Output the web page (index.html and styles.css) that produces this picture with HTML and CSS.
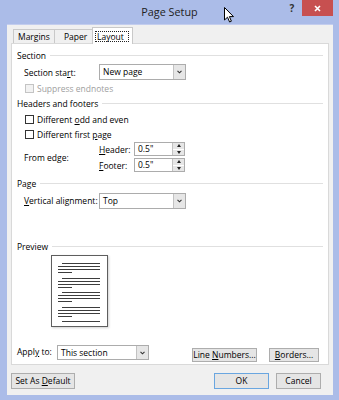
FILE: index.html
```html
<!DOCTYPE html>
<html lang="en">
<head>
    <meta charset="UTF-8">
    <title>Page Setup</title>
    <link rel="stylesheet" href="styles.css">
</head>
<body>
    <div class="window">
        <div class="titlebar">
            <span></span>
            <div class="title">Page Setup</div>
            <div class="caption-btns">
                <span class="help">?</span>
                <span class="close">
                    <svg width="7" height="7" viewBox="0 0 7 7"><path d="M1 1L6 6M6 1L1 6" stroke="#fff" stroke-width="1.6"/></svg>
                </span>
            </div>
        </div>

        <div class="client">
            <div class="tabs">
                <div class="tab">Margins</div>
                <div class="tab">Paper</div>
                <div class="tab active"><span class="focus">Layout</span></div>
            </div>

            <div class="panel">
                <div class="group-head"><span>Section</span></div>
                <div class="row form-row indent">
                    <span>Section sta<u>r</u>t:</span>
                    <div class="combo"><span>New page</span><i class="arrow"><svg width="5" height="4" viewBox="0 0 5 4"><path d="M0.5 0.8L2.5 2.8L4.5 0.8" fill="none" stroke="#333" stroke-width="1.1"/></svg></i></div>
                </div>
                <div class="row check-row indent disabled">
                    <i class="check"></i><span>Suppress endnotes</span>
                </div>

                <div class="group-head hf"><span>Headers and footers</span></div>
                <div class="row check-row indent odd">
                    <i class="check"></i><span>Different <u>o</u>dd and even</span>
                </div>
                <div class="row check-row indent">
                    <i class="check"></i><span>Different first <u>p</u>age</span>
                </div>
                <div class="edge indent">
                    <span class="edge-label">From edge:</span>
                    <span><u>H</u>eader:</span>
                    <div class="spin"><span>0.5"</span><i class="spin-btns"><b class="up"></b><b class="down"></b></i></div>
                    <span><u>F</u>ooter:</span>
                    <div class="spin"><span>0.5"</span><i class="spin-btns"><b class="up"></b><b class="down"></b></i></div>
                </div>

                <div class="group-head page-head"><span>Page</span></div>
                <div class="row form-row indent valign">
                    <span><u>V</u>ertical alignment:</span>
                    <div class="combo"><span>Top</span><i class="arrow"><svg width="5" height="4" viewBox="0 0 5 4"><path d="M0.5 0.8L2.5 2.8L4.5 0.8" fill="none" stroke="#333" stroke-width="1.1"/></svg></i></div>
                </div>

                <div class="group-head preview-head"><span>Preview</span></div>
                <div class="preview">
                    <svg width="58" height="73" viewBox="0 0 58 73">
                        <rect x="0.5" y="0.5" width="56" height="71" fill="#fff" stroke="#5e5e5e"/>
                        <g stroke="#3d3d3d" stroke-width="1">
                            <path d="M11 8.5H49M7 11.5H49M7 14.5H49M7 17.5H21"/>
                            <path d="M11 23.5H49M7 26.5H49M7 29.5H49M7 32.5H21"/>
                            <path d="M11 37.5H49M7 40.5H49M7 43.5H49M7 46.5H21"/>
                            <path d="M11 52.5H49M7 55.5H49M7 58.5H49M7 61.5H21"/>
                            <path d="M11 66.5H49"/>
                        </g>
                    </svg>
                </div>

                <div class="apply-row">
                    <span class="apply-label">Appl<u>y</u> to:</span>
                    <div class="combo apply-combo"><span>This section</span><i class="arrow"><svg width="5" height="4" viewBox="0 0 5 4"><path d="M0.5 0.8L2.5 2.8L4.5 0.8" fill="none" stroke="#333" stroke-width="1.1"/></svg></i></div>
                    <button class="btn line-btn">Line <u>N</u>umbers...</button>
                    <button class="btn borders-btn"><u>B</u>orders...</button>
                </div>
            </div>

            <div class="footer">
                <button class="btn default-btn">Set As <u>D</u>efault</button>
                <button class="btn ok-btn primary">OK</button>
                <button class="btn cancel-btn">Cancel</button>
            </div>
        </div>

        <svg class="cursor" width="11" height="16" viewBox="0 0 11 16">
            <path d="M0.5 0.5V13L3.5 10.2L5.6 15L7.4 14.2L5.4 9.6H9.5Z" fill="#fff" stroke="#000" stroke-width="1" stroke-linejoin="round"/>
        </svg>
    </div>
</body>
</html>
```

FILE: styles.css
```css
* {
  box-sizing: border-box;
}
body {
  margin: 0;
  font-family: "Open Sans", "Noto Sans", sans-serif;
  font-size: 8.5px;
  color: #000;
}
u {
  text-decoration: underline;
  text-underline-offset: 1px;
}

.window {
  position: relative;
  width: 339px;
  height: 400px;
  background: #abbce8;
  display: flex;
  flex-direction: column;
}
.titlebar {
  height: 24px;
  display: grid;
  grid-template-columns: 1fr auto 1fr;
}
.title {
  font-size: 10.8px;
  line-height: 24px;
  color: #222;
}
.caption-btns {
  display: flex;
  justify-content: flex-end;
  align-items: flex-start;
  padding-right: 6px;
}
.help {
  width: 12px;
  margin-right: 4px;
  line-height: 17px;
  text-align: center;
  font-size: 10px;
  font-weight: bold;
  color: #333;
}
.close {
  width: 31px;
  height: 16px;
  background: #c75050;
  display: flex;
  align-items: center;
  justify-content: center;
}

.client {
  flex: 1;
  margin: 0 6px 5px 7px;
  background: #f0f0f0;
  border-top: 1px solid #c3cdee;
  padding: 2px 4px 6px;
  display: flex;
  flex-direction: column;
}

/* tabs */
.tabs {
  display: flex;
  align-items: flex-end;
  height: 16px;
  padding-left: 2px;
}
.tab {
  height: 14px;
  line-height: 13px;
  padding: 0 5px;
  background: #f0f0f0;
  border: 1px solid #c9c9c9;
  border-bottom: none;
  margin-right: -1px;
}
.tab:first-child {
  width: 42px;
  padding-left: 4px;
}
.tab:nth-child(2) {
  width: 41px;
  padding-left: 9px;
}
.tab.active {
  position: relative;
  z-index: 1;
  height: 17px;
  width: 41px;
  margin: 0 0 -1px -2px;
  padding: 4px 4px 0 3px;
  background: #fff;
  border-color: #c9c9c9;
}
.focus {
  display: block;
  outline: 1px dotted #222;
  padding: 0 1px;
  line-height: 9px;
}

/* panel */
.panel {
  flex: 1;
  background: #fff;
  border: 1px solid #d9d9d9;
  padding: 4px 5px 0;
  display: flex;
  flex-direction: column;
}
.group-head {
  display: flex;
  align-items: center;
  gap: 4px;
  height: 14px;
}
.group-head::after {
  content: "";
  flex: 1;
  height: 1px;
  background: #e0e0e0;
}
.group-head.hf {
  height: 17px;
}
.group-head.page-head {
  margin-top: 3px;
}
.group-head.preview-head {
  margin-top: 28px;
}
.indent {
  margin-left: 7px;
}
.row {
  display: flex;
  align-items: center;
}
.form-row {
  height: 20px;
  display: grid;
  grid-template-columns: 75px 87px;
  align-items: center;
}
.form-row.valign {
  height: 21px;
}
.check-row {
  height: 13px;
  gap: 3px;
}
.check-row.odd {
  height: 15px;
}
.check-row + .check-row {
  height: 14px;
}
.check {
  width: 9px;
  height: 9px;
  border: 1px solid #333;
  background: #fff;
  margin-left: 1px;
}
.disabled {
  color: #a0a0a0;
}
.disabled .check {
  border-color: #c4c4c4;
  background: #f2f2f2;
}

/* dropdowns */
.combo {
  height: 16px;
  display: flex;
  border: 1px solid #acacac;
  background: #fff;
}
.combo span {
  flex: 1;
  line-height: 14px;
  padding-left: 3px;
}
.arrow {
  width: 12px;
  background: #e6e6e6;
  border-left: 1px solid #c2c2c2;
  display: flex;
  align-items: center;
  justify-content: center;
}

/* from edge */
.edge {
  display: grid;
  grid-template-columns: 75px 35px 51px;
  grid-template-rows: 14px 14px;
  row-gap: 2px;
  align-items: center;
  padding: 1px 0;
}
.edge-label {
  grid-row: 1 / 3;
}
.spin {
  height: 14px;
  display: flex;
  border: 1px solid #acacac;
  background: #fff;
}
.spin span {
  flex: 1;
  line-height: 12px;
  padding-left: 3px;
}
.spin-btns {
  width: 12px;
  border-left: 1px solid #c2c2c2;
  display: flex;
  flex-direction: column;
}
.spin-btns b {
  flex: 1;
  background: #e6e6e6;
  display: flex;
  align-items: center;
  justify-content: center;
}
.spin-btns b + b {
  border-top: 1px solid #fff;
}
.spin-btns .up::before {
  content: "";
  border: 2.5px solid transparent;
  border-bottom: 3px solid #222;
  border-top: none;
}
.spin-btns .down::before {
  content: "";
  border: 2.5px solid transparent;
  border-top: 3px solid #222;
  border-bottom: none;
}

/* preview */
.preview {
  margin: 2px 0 0 34px;
  height: 73px;
}
.preview svg {
  display: block;
  filter: drop-shadow(1px 1px 1px rgba(0, 0, 0, 0.18));
}

.apply-row {
  display: flex;
  align-items: flex-start;
  height: 20px;
  margin-top: 14px;
  padding-right: 4px;
}
.apply-label {
  width: 40px;
  line-height: 20px;
}
.apply-combo {
  width: 92px;
  margin-top: 3px;
  height: 15px;
}
.apply-combo span {
  line-height: 13px;
}

/* buttons */
.btn {
  font: inherit;
  color: #000;
  height: 14px;
  padding: 0;
  background: #e5e5e5;
  border: 1px solid #adadad;
  line-height: 12px;
}
.line-btn {
  margin: 6px 0 0 auto;
  width: 65px;
}
.borders-btn {
  margin: 6px 0 0 12px;
  width: 50px;
}
.footer {
  display: flex;
  margin-top: 8px;
  height: 16px;
}
.footer .btn {
  height: 16px;
  line-height: 14px;
}
.default-btn {
  width: 64px;
}
.ok-btn {
  width: 55px;
  margin-left: auto;
}
.cancel-btn {
  width: 45px;
  margin: 0 8px 0 7px;
}
.btn.primary {
  border-color: #6aa6e0;
}

.cursor {
  position: absolute;
  left: 224px;
  top: 7px;
}
```
